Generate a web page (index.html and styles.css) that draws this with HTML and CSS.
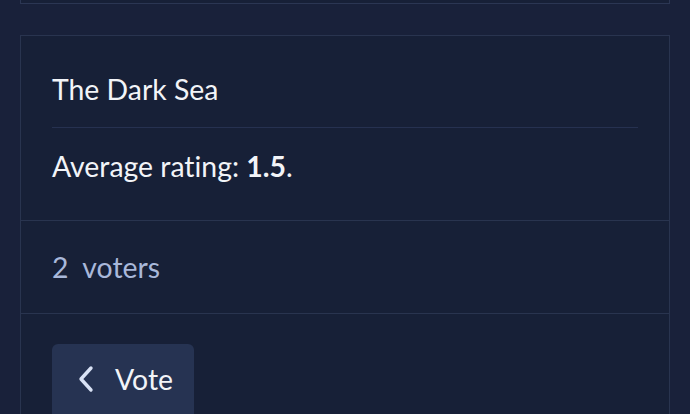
FILE: index.html
```html
<!DOCTYPE html>
<html>
<head>
<meta charset="utf-8">
<link rel="stylesheet" href="styles.css">
</head>
<body>
<div class="card-prev"></div>
<div class="card">
  <div class="head">
    <div class="title">The Dark Sea</div>
    <div class="rating">Average rating: <b>1.5</b>.</div>
  </div>
  <div class="voters">2&nbsp; voters</div>
  <div class="actions">
    <button class="btn">
      <svg class="chev" width="18" height="28" viewBox="0 0 18 28"><path d="M14 3 L4 14 L14 25" fill="none" stroke="#d9e2f5" stroke-width="3.4" stroke-linecap="round" stroke-linejoin="round"/></svg>
      <span>Vote</span>
    </button>
  </div>
</div>
</body>
</html>
```
FILE: styles.css
```css
html, body {
  margin: 0;
  padding: 0;
  background: #19213a;
  height: 100%;
  overflow: hidden;
}
body {
  font-family: Lato, "Noto Sans", sans-serif;
  font-variant-ligatures: none;
  color: #f2f4f8;
}
.card-prev {
  margin: 0 20px;
  height: 3px;
  background: #172037;
  border: 1px solid #2b3653;
  border-top: none;
}
.card {
  margin: 31px 20px 0;
  background: #172037;
  border: 1px solid #29344f;
  border-bottom: none;
  height: 378px;
  overflow: hidden;
}
.head {
  padding: 0 31px;
}
.title {
  font-size: 28.4px;
  line-height: 40px;
  padding-top: 33px;
  padding-bottom: 18px;
  border-bottom: 1px solid #263150;
}
.rating {
  font-size: 28.4px;
  line-height: 40px;
  padding-top: 18px;
  padding-bottom: 34px;
}
.rating b {
  font-weight: 700;
}
.voters {
  border-top: 1px solid #29344f;
  border-bottom: 1px solid #29344f;
  padding: 0 31px;
  height: 92px;
  display: flex;
  align-items: center;
  font-size: 28.4px;
  color: #a9b8da;
}
.actions {
  padding: 30px 31px 0;
}
.btn {
  display: flex;
  align-items: center;
  gap: 20px;
  height: 80px;
  padding: 0 21px 10px 25px;
  background: #263352;
  border: none;
  border-radius: 6px;
  font-family: inherit;
  font-size: 28.4px;
  color: #f2f4f8;
}
.chev {
  display: block;
}
```
